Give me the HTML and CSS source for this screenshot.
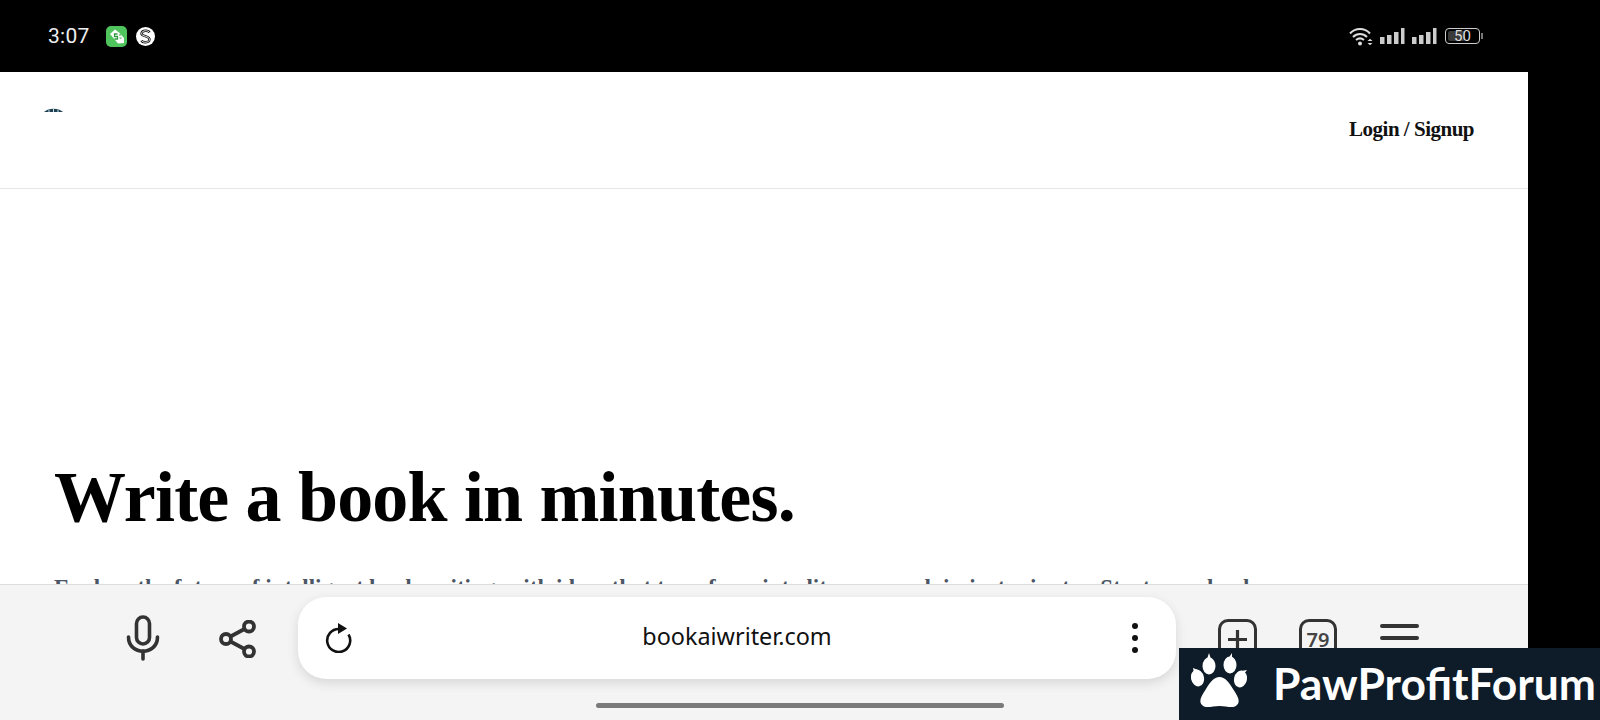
FILE: index.html
```html
<!DOCTYPE html>
<html>
<head>
<title>Book AI Writer</title>
<link rel="stylesheet" href="styles.css">
</head>
<body>

  <div class="status-bar">
    <div class="status-left">
      <span class="clock">3:07</span>
      <svg class="app-icon" width="21" height="21" viewBox="0 0 21 21">
        <rect width="21" height="21" rx="5" fill="#4fc45c"/>
        <path d="M4 8 L9 3.500 L13 6.500 L18 12 L18 17 L12 17.500 Z" fill="#fff"/>
        <path d="M11.500 8 H8.500 V10.500 H11.500 V13 H8.500" fill="none" stroke="#2f9a3e" stroke-width="1.300"/>
        <path d="M13 9 H15 M13.500 12 H15.500" stroke="#2f9a3e" stroke-width="1"/>
      </svg>
      <svg class="app-icon" width="19" height="19" viewBox="0 0 19 19">
        <circle cx="9.500" cy="9.500" r="9.500" fill="#fff"/>
        <path d="M13.500 5.500 C12.500 3 6 3 5.500 6.500 C5.300 9.500 13.700 9 13.500 12.500 C13.300 16 6.500 16 5.500 13.500" fill="none" stroke="#111" stroke-width="2.400"/>
        <path d="M13.500 5.500 C12.500 3 6 3 5.500 6.500 C5.300 9.500 13.700 9 13.500 12.500 C13.300 16 6.500 16 5.500 13.500" fill="none" stroke="#fff" stroke-width="0.900"/>
      </svg>
    </div>
    <div class="status-right">
      <svg class="wifi" width="24" height="19" viewBox="0 0 24 19" fill="none" stroke="#ddd" stroke-width="2">
        <path d="M1 6.500 C6.500 0.500 15.500 0.500 21 6.500"/>
        <path d="M4 10 C8 6 14 6 18 10"/>
        <path d="M7 13 C9.500 11 12.500 11 15 13"/>
        <circle cx="11" cy="16.500" r="2" fill="#ddd" stroke="none"/>
        <path d="M18.500 14 L21 11.800 L23.500 14 Z M18.500 16 L21 18.200 L23.500 16 Z" fill="#ddd" stroke="none"/>
      </svg>
      <svg class="signal" width="25" height="16" viewBox="0 0 25 16" fill="#ccc">
        <rect x="0" y="9" width="4.500" height="7"/>
        <rect x="7" y="7" width="4.500" height="9"/>
        <rect x="14" y="4" width="4.500" height="12"/>
        <rect x="21" y="0" width="3.500" height="16"/>
      </svg>
      <svg class="signal" width="25" height="16" viewBox="0 0 25 16" fill="#ccc">
        <rect x="0" y="9" width="4.500" height="7"/>
        <rect x="7" y="7" width="4.500" height="9"/>
        <rect x="14" y="4" width="4.500" height="12"/>
        <rect x="21" y="0" width="3.500" height="16"/>
      </svg>
      <div class="battery">
        <div class="battery-level"></div>
        <span class="battery-text">50</span>
      </div>
    </div>
  </div>

  <div class="page">
    <div class="site-nav">
      <div class="site-logo">
        <svg width="20" height="4" viewBox="0 0 20 4">
          <path d="M0 4 C4 -0.500 15 -0.500 19 4 Z" fill="#1d3f52"/>
          <path d="M5 1.500 V4 M9.500 1 V4 M14 1.500 V4" stroke="#cfe0e8" stroke-width="1"/>
        </svg>
      </div>
      <a class="login-link">Login / Signup</a>
    </div>

    <div class="hero">
      <h1>Write a book in minutes.</h1>
      <p>Explore the future of intelligent book writing, with ideas that transform into literary work in just minutes. Start your book</p>
    </div>

    <div class="browser-bar">
      <svg class="tool-icon mic" width="34" height="46" viewBox="0 0 34 46" fill="none" stroke="#333" stroke-width="3.600" stroke-linecap="round">
        <rect x="10.500" y="2" width="13" height="27" rx="6.500"/>
        <path d="M2.500 22 C2.500 41 31.500 41 31.500 22"/>
        <path d="M17 36 V44"/>
      </svg>
      <svg class="tool-icon share" width="38" height="38" viewBox="0 0 38 38" fill="none" stroke="#333" stroke-width="3.800">
        <circle cx="7" cy="19" r="5"/>
        <circle cx="30" cy="6.500" r="5"/>
        <circle cx="30" cy="31.500" r="5"/>
        <path d="M11.500 16.500 L25.500 9 M11.500 21.500 L25.500 29"/>
      </svg>

      <div class="address-bar">
        <svg class="reload" width="28" height="30" viewBox="0 0 28 30" fill="none">
          <path d="M15 6 A11.500 11.500 0 1 0 24.500 11.500" stroke="#111" stroke-width="2.600"/>
          <path d="M14 0 L23 5.500 L14 11 Z" fill="#111"/>
        </svg>
        <span class="url">bookaiwriter.com</span>
        <div class="more-dots"><i></i><i></i><i></i></div>
      </div>

      <div class="tab-btn plus">
        <svg width="19" height="19" viewBox="0 0 19 19" stroke="#333" stroke-width="3.200">
          <path d="M0 9.500 H19 M9.500 0 V19"/>
        </svg>
      </div>
      <div class="tab-btn count"><span>79</span></div>
      <div class="menu-lines"><i></i><i></i></div>
    </div>
    <div class="home-bar"></div>
  </div>

  <div class="watermark">
    <svg width="58" height="60" viewBox="0 0 58 60" fill="#fff">
      <ellipse cx="6.500" cy="27" rx="6.500" ry="8.500" transform="rotate(-12 6.500 27)"/>
      <ellipse cx="18" cy="15" rx="6.500" ry="8.500"/>
      <ellipse cx="39" cy="14" rx="6.500" ry="8.500"/>
      <ellipse cx="49.500" cy="28" rx="6.500" ry="8.500" transform="rotate(12 49.500 28)"/>
      <path d="M18 2 L20 8 L16 8 Z M41 2 L41 8 L37 8 Z M2 17 L7 19 L3 22 Z M56 19 L53 23 L50 20 Z"/>
      <path d="M28.500 26 C34 26 38 31 42 38 C46 44 50 50 46 54 C42 58 36 55 28.500 55 C21 55 15 58 11 54 C7 50 11 44 15 38 C19 31 23 26 28.500 26 Z"/>
    </svg>
    <span>PawProfitForum</span>
  </div>

</body>
</html>
```

FILE: styles.css
```css
html, body {
  margin: 0;
  padding: 0;
}

body {
  width: 1600px;
  height: 720px;
  background-color: #000;
  overflow: hidden;
  position: relative;
  font-family: "Liberation Serif", serif;
}

.status-bar {
  height: 72px;
  padding: 0 120px 0 48px;
  display: flex;
  justify-content: space-between;
  align-items: center;
}

.status-left {
  display: flex;
  align-items: center;
}

.clock {
  font-family: "Roboto", sans-serif;
  font-size: 21px;
  letter-spacing: 0.3px;
  color: #eee;
  margin-right: 16px;
}

.app-icon {
  margin-right: 9px;
}

.status-right {
  display: flex;
  align-items: center;
  gap: 7px;
}

.battery {
  box-sizing: border-box;
  width: 35px;
  height: 16px;
  margin-left: 1px;
  border: 1px solid #ccc;
  border-radius: 4px;
  position: relative;
  display: flex;
  align-items: center;
  justify-content: center;
}

.battery::after {
  content: "";
  position: absolute;
  right: -4px;
  top: 4px;
  width: 2px;
  height: 6px;
  background-color: #777;
}

.battery-level {
  position: absolute;
  left: 2px;
  top: 2px;
  bottom: 2px;
  width: 17px;
  background-color: #3a3a3a;
  border-radius: 2px;
}

.battery-text {
  position: relative;
  font-family: "Roboto", sans-serif;
  font-size: 15px;
  color: #ddd;
}

.page {
  width: 1528px;
  height: 648px;
  background-color: #fff;
  position: relative;
  overflow: hidden;
}

.site-nav {
  height: 116px;
  border-bottom: 1px solid #e5e7eb;
  padding: 0 54px 0 44px;
  display: flex;
  justify-content: space-between;
  align-items: center;
}

.site-logo {
  align-self: flex-start;
  padding-top: 35px;
  line-height: 0;
}

.login-link {
  font-family: "Liberation Serif", serif;
  font-weight: bold;
  font-size: 21px;
  letter-spacing: -0.5px;
  color: #111;
  margin-bottom: 2px;
}

.hero {
  padding: 0 54px;
}

.hero h1 {
  margin: 0;
  padding-top: 272px;
  font-size: 72px;
  line-height: 72px;
  font-weight: bold;
  letter-spacing: -0.83px;
  color: #000;
}

.hero p {
  margin: 41px 0 0;
  font-size: 23px;
  font-weight: bold;
  line-height: 28px;
  color: #4b5563;
  white-space: nowrap;
}

.browser-bar {
  position: absolute;
  left: 0;
  right: 0;
  bottom: 0;
  height: 135px;
  background-color: #f4f4f4;
  border-top: 1px solid #dcdcdc;
  display: flex;
  align-items: flex-start;
}

.tool-icon {
  flex-shrink: 0;
}

.mic {
  margin: 30px 0 0 126px;
}

.share {
  margin: 35px 0 0 59px;
}

.address-bar {
  flex-shrink: 0;
  width: 878px;
  height: 82px;
  margin: 12px 0 0 41px;
  background-color: #fff;
  border-radius: 28px;
  box-shadow: 0 4px 12px rgba(0, 0, 0, 0.12);
  display: flex;
  align-items: center;
  justify-content: center;
  position: relative;
}

.reload {
  position: absolute;
  left: 26px;
  top: 26px;
}

.url {
  font-family: "Noto Sans", sans-serif;
  font-size: 23.4px;
  color: #111;
  margin-bottom: 4px;
}

.more-dots {
  position: absolute;
  right: 38px;
  top: 26px;
  display: flex;
  flex-direction: column;
  gap: 6px;
}

.more-dots i {
  display: block;
  width: 6px;
  height: 6px;
  border-radius: 50%;
  background-color: #111;
}

.tab-btn {
  flex-shrink: 0;
  box-sizing: border-box;
  height: 40px;
  border: 3px solid #333;
  border-radius: 10px;
  display: flex;
  align-items: center;
  justify-content: center;
  color: #444;
  font-family: "Noto Sans", sans-serif;
  margin-top: 34px;
}

.plus {
  width: 39px;
  margin-left: 42px;
}

.count {
  width: 38px;
  margin-left: 42px;
  font-size: 20px;
  font-weight: 600;
}

.menu-lines {
  margin: 39px 0 0 43px;
}

.menu-lines i {
  display: block;
  width: 39px;
  height: 4px;
  background-color: #333;
  border-radius: 2px;
  margin-bottom: 8px;
}

.home-bar {
  position: absolute;
  left: 596px;
  bottom: 12px;
  width: 408px;
  height: 5px;
  border-radius: 3px;
  background-color: #7a7a7a;
}

.watermark {
  position: absolute;
  left: 1179px;
  top: 648px;
  width: 421px;
  height: 72px;
  background-color: #0d1c28;
  display: flex;
  align-items: center;
  overflow: hidden;
}

.watermark svg {
  margin-left: 12px;
  margin-bottom: 6px;
  flex-shrink: 0;
}

.watermark span {
  margin-left: 24px;
  margin-bottom: 4px;
  font-family: "Lato", sans-serif;
  font-size: 44.4px;
  font-weight: bold;
  color: #fff;
  white-space: nowrap;
}
```
